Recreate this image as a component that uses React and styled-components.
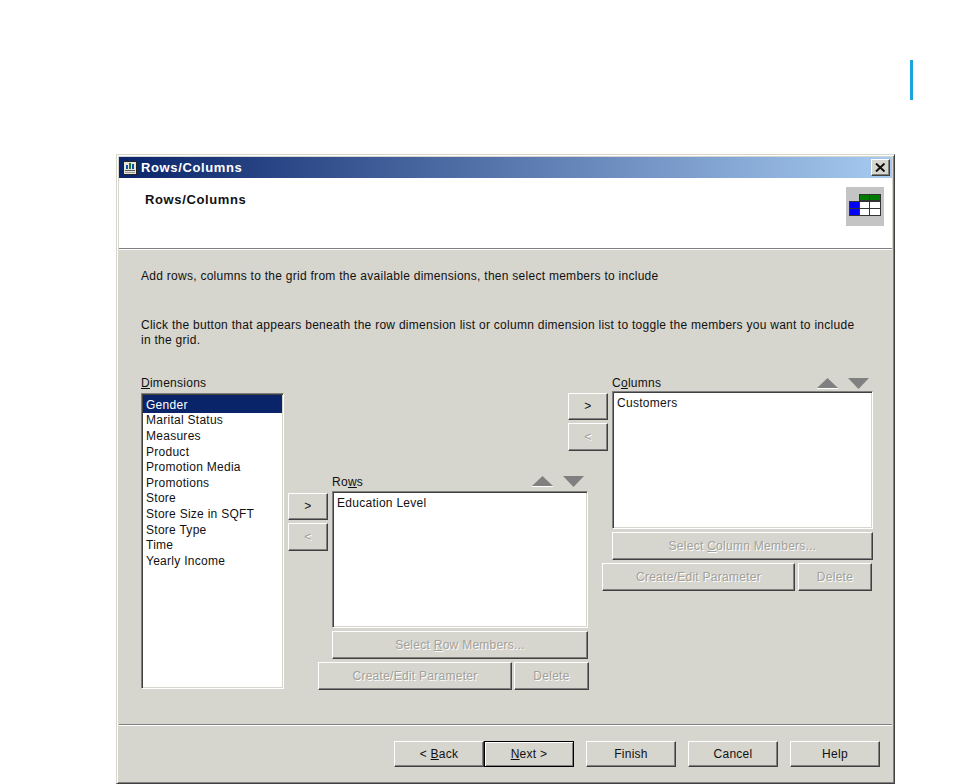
import React from 'react'
import styled, { createGlobalStyle, css } from 'styled-components'

const FACE = '#d6d5ce'

const dimensions = [
  'Gender',
  'Marital Status',
  'Measures',
  'Product',
  'Promotion Media',
  'Promotions',
  'Store',
  'Store Size in SQFT',
  'Store Type',
  'Time',
  'Yearly Income',
]

function TitleIcon() {
  return (
    <svg width="14" height="14" viewBox="0 0 14 14">
      <rect x="0.5" y="0.5" width="13" height="13" fill="#e8e4d8" stroke="#222" />
      <rect x="3" y="4" width="2" height="4" fill="#0a4fa8" />
      <rect x="6" y="2" width="2" height="6" fill="#1a7a3a" />
      <rect x="9" y="3" width="2" height="5" fill="#0a4fa8" />
      <rect x="2" y="9" width="10" height="1" fill="#555" />
      <rect x="2" y="11" width="10" height="1" fill="#999" />
    </svg>
  )
}

function CloseIcon() {
  return (
    <svg width="11" height="9" viewBox="0 0 11 9">
      <path d="M1 0.5 L9.5 8.5 M9.5 0.5 L1 8.5" stroke="#111" strokeWidth="2" fill="none" />
    </svg>
  )
}

function GridIcon() {
  return (
    <svg width="32" height="22" viewBox="0 0 32 22">
      <rect x="10" y="0" width="22" height="7" fill="#333" />
      <rect x="11" y="1" width="9" height="5" fill="#007a00" />
      <rect x="21" y="1" width="10" height="5" fill="#007a00" />
      <rect x="0" y="7" width="32" height="15" fill="#333" />
      <rect x="1" y="8" width="9" height="6" fill="#0000ff" />
      <rect x="1" y="15" width="9" height="6" fill="#0000ff" />
      <rect x="11" y="8" width="9" height="6" fill="#fff" />
      <rect x="21" y="8" width="10" height="6" fill="#fff" />
      <rect x="11" y="15" width="9" height="6" fill="#fff" />
      <rect x="21" y="15" width="10" height="6" fill="#fff" />
    </svg>
  )
}

function Triangle({ down }) {
  return (
    <svg width="21" height="11" viewBox="0 0 21 11">
      {down ? (
        <path d="M0 0 H21 L10.5 11 Z" fill="#808080" />
      ) : (
        <>
          <path d="M10.5 0 L21 10 H0 Z" fill="#808080" />
          <rect x="0" y="10" width="21" height="1" fill="#fff" />
        </>
      )}
    </svg>
  )
}

function App() {
  return (
    <>
      <GlobalStyle />
      <Page>
        <TopStrip>
          <Marker />
        </TopStrip>
        <Window>
          <TitleBar>
            <TitleIcon />
            <TitleText>Rows/Columns</TitleText>
            <CloseButton>
              <CloseIcon />
            </CloseButton>
          </TitleBar>

          <Banner>
            <BannerTitle>Rows/Columns</BannerTitle>
            <BannerIcon>
              <GridIcon />
            </BannerIcon>
          </Banner>

          <Body>
            <Intro>Add rows, columns to the grid from the available dimensions, then select members to include</Intro>
            <Help>
              Click the button that appears beneath the row dimension list or column dimension list to toggle the members you want to include in the grid.
            </Help>

            <Picker>
              <DimensionColumn>
                <FieldLabel><u>D</u>imensions</FieldLabel>
                <ListBox $height={296}>
                  {dimensions.map((name, i) => (
                    <ListRow key={name} $selected={i === 0}>{name}</ListRow>
                  ))}
                </ListBox>
              </DimensionColumn>

              <TransferButtons $top={118} $left={4}>
                <Button $h={27}>&gt;</Button>
                <Button $h={28} disabled>&lt;</Button>
              </TransferButtons>

              <AxisColumn $top={98} $left={4} $width={256}>
                <AxisHeader $height={18}>
                  <FieldLabel $offset={1}>Ro<u>w</u>s</FieldLabel>
                  <Sorters>
                    <Triangle />
                    <Triangle down />
                  </Sorters>
                </AxisHeader>
                <ListBox $height={137}>
                  <ListRow>Education Level</ListRow>
                </ListBox>
                <Button $h={28} disabled>Select <u>R</u>ow Members...</Button>
                <ParamRow $gap={2} $right={-1}>
                  <Button $h={28} $w={194} disabled>Create/Edit Parameter</Button>
                  <Button $h={28} $w={75} disabled>Delete</Button>
                </ParamRow>
              </AxisColumn>

              <TransferButtons $top={18} $left={-20}>
                <Button $h={27}>&gt;</Button>
                <Button $h={28} disabled>&lt;</Button>
              </TransferButtons>

              <AxisColumn $top={0} $left={4} $width={261}>
                <AxisHeader $height={16}>
                  <FieldLabel>C<u>o</u>lumns</FieldLabel>
                  <Sorters>
                    <Triangle />
                    <Triangle down />
                  </Sorters>
                </AxisHeader>
                <ListBox $height={138}>
                  <ListRow>Customers</ListRow>
                </ListBox>
                <Button $h={28} disabled>Select <u>C</u>olumn Members...</Button>
                <ParamRow $gap={3} $right={1}>
                  <Button $h={28} $w={193} disabled>Create/Edit Parameter</Button>
                  <Button $h={28} $w={74} disabled>Delete</Button>
                </ParamRow>
              </AxisColumn>
            </Picker>
          </Body>

          <Footer>
            <BackNext>
              <Button $h={26} $w={90}>&lt; <u>B</u>ack</Button>
              <Button $h={26} $w={90} $default><u>N</u>ext &gt;</Button>
            </BackNext>
            <Button $h={26} $w={90}>Finish</Button>
            <Button $h={26} $w={90}>Cancel</Button>
            <Button $h={26} $w={90}>Help</Button>
          </Footer>
        </Window>
      </Page>
    </>
  )
}

export default App

const GlobalStyle = createGlobalStyle`
  html, body {
    margin: 0;
    padding: 0;
    background: #fff;
  }
  body {
    font-family: "Liberation Sans", Arial, sans-serif;
    font-size: 12px;
    color: #111;
  }
`

const Page = styled.div`
  width: 970px;
  height: 784px;
  overflow: hidden;
  background: #fff;
`
const TopStrip = styled.div`
  height: 154px;
  box-sizing: border-box;
  padding: 60px 0 0 910px;
`
const Marker = styled.div`
  width: 3px;
  height: 40px;
  background: #1ba3dc;
`
const Window = styled.div`
  margin-left: 116px;
  width: 779px;
  height: 630px;
  box-sizing: border-box;
  display: flex;
  flex-direction: column;
  padding: 2px;
  background: ${FACE};
  border: 1px solid;
  border-color: ${FACE} #404040 #404040 ${FACE};
  box-shadow: inset 1px 1px 0 #fff, inset -1px -1px 0 #808080;
`
const TitleBar = styled.div`
  height: 21px;
  flex: none;
  display: flex;
  align-items: center;
  padding: 0 2px 0 4px;
  background: linear-gradient(90deg, #0a246a, #a6caf0);
`
const TitleText = styled.div`
  margin-left: 4px;
  flex: 1;
  font-size: 13px;
  font-weight: bold;
  letter-spacing: 0.63px;
  color: #fff;
`
const raised = css`
  background: ${FACE};
  border: 1px solid;
  border-color: #fff #404040 #404040 #fff;
  box-shadow: inset -1px -1px 0 #808080;
`
const CloseButton = styled.div`
  ${raised}
  box-sizing: border-box;
  width: 19px;
  height: 17px;
  display: flex;
  align-items: center;
  justify-content: center;
`
const Banner = styled.div`
  height: 71px;
  flex: none;
  box-sizing: border-box;
  display: flex;
  justify-content: space-between;
  padding: 9px 8px 0 26px;
  background: #fff;
  border-bottom: 1px solid #808080;
  box-shadow: 0 1px 0 #fff;
`
const BannerTitle = styled.div`
  margin-top: 5px;
  font-size: 13px;
  font-weight: bold;
  letter-spacing: 0.63px;
`
const BannerIcon = styled.div`
  width: 38px;
  height: 39px;
  box-sizing: border-box;
  padding-top: 7px;
  display: flex;
  align-items: flex-start;
  justify-content: center;
  background: #c4c4c4;
`
const Body = styled.div`
  flex: 1;
  min-height: 0;
  padding: 20px 20px 0 22px;
`
const Intro = styled.div`
  line-height: 15.6px;
  letter-spacing: 0.27px;
`
const Help = styled.div`
  margin-top: 33px;
  width: 722px;
  line-height: 15.6px;
  letter-spacing: 0.27px;
`
const Picker = styled.div`
  margin-top: 26px;
  display: flex;
  align-items: flex-start;
`
const DimensionColumn = styled.div`
  width: 143px;
  flex: none;
`
const FieldLabel = styled.div`
  height: 18px;
  padding-top: ${(p) => p.$offset || 0}px;
  box-sizing: border-box;
  line-height: 16px;
  letter-spacing: 0.27px;
`
const ListBox = styled.div`
  height: ${(p) => p.$height}px;
  box-sizing: border-box;
  padding: 4px 1px;
  overflow: hidden;
  background: #fff;
  border: 1px solid;
  border-color: #808080 #fff #fff #808080;
  box-shadow: inset 1px 1px 0 #404040, inset -1px -1px 0 ${FACE};
`
const ListRow = styled.div`
  padding: 0 3px;
  height: 15.6px;
  line-height: 15.6px;
  letter-spacing: 0.27px;
  white-space: nowrap;
  ${(p) => p.$selected && css`
    box-sizing: border-box;
    height: 18px;
    padding-top: 3px;
    margin: -3px 0 0.6px;
    background: #0a246a;
    color: #fff;
  `}
`
const TransferButtons = styled.div`
  width: 40px;
  flex: none;
  margin-top: ${(p) => p.$top}px;
  margin-left: ${(p) => p.$left}px;
  display: flex;
  flex-direction: column;
  gap: 3px;
`
const AxisColumn = styled.div`
  width: ${(p) => p.$width}px;
  flex: none;
  margin-top: ${(p) => p.$top}px;
  margin-left: ${(p) => p.$left}px;
  display: flex;
  flex-direction: column;
  gap: 3px;
`
const AxisHeader = styled.div`
  height: ${(p) => p.$height}px;
  display: flex;
  justify-content: space-between;
  margin-bottom: -3px;
`
const Sorters = styled.div`
  display: flex;
  gap: 10px;
  padding: 3px 4px 0 0;
`
const ParamRow = styled.div`
  display: flex;
  justify-content: flex-end;
  gap: ${(p) => p.$gap}px;
  margin-left: -14px;
  margin-right: ${(p) => p.$right}px;
`
const Button = styled.button`
  ${raised}
  box-sizing: border-box;
  width: ${(p) => (p.$w ? `${p.$w}px` : '100%')};
  height: ${(p) => p.$h}px;
  flex: none;
  padding: 0;
  font-family: inherit;
  font-size: 12px;
  letter-spacing: 0.27px;
  color: #111;
  &:disabled {
    color: #a2a19b;
    text-shadow: 1px 1px 0 #fff;
  }
  ${(p) => p.$default && css`
    border-color: #000;
    box-shadow: inset 1px 1px 0 #fff, inset -1px -1px 0 #808080;
  `}
`
const Footer = styled.div`
  height: 57px;
  flex: none;
  box-sizing: border-box;
  display: flex;
  justify-content: flex-end;
  gap: 12px;
  padding: 16px 12px 0 0;
  border-top: 1px solid #808080;
  box-shadow: inset 0 1px 0 #fff;
`
const BackNext = styled.div`
  display: flex;
`
